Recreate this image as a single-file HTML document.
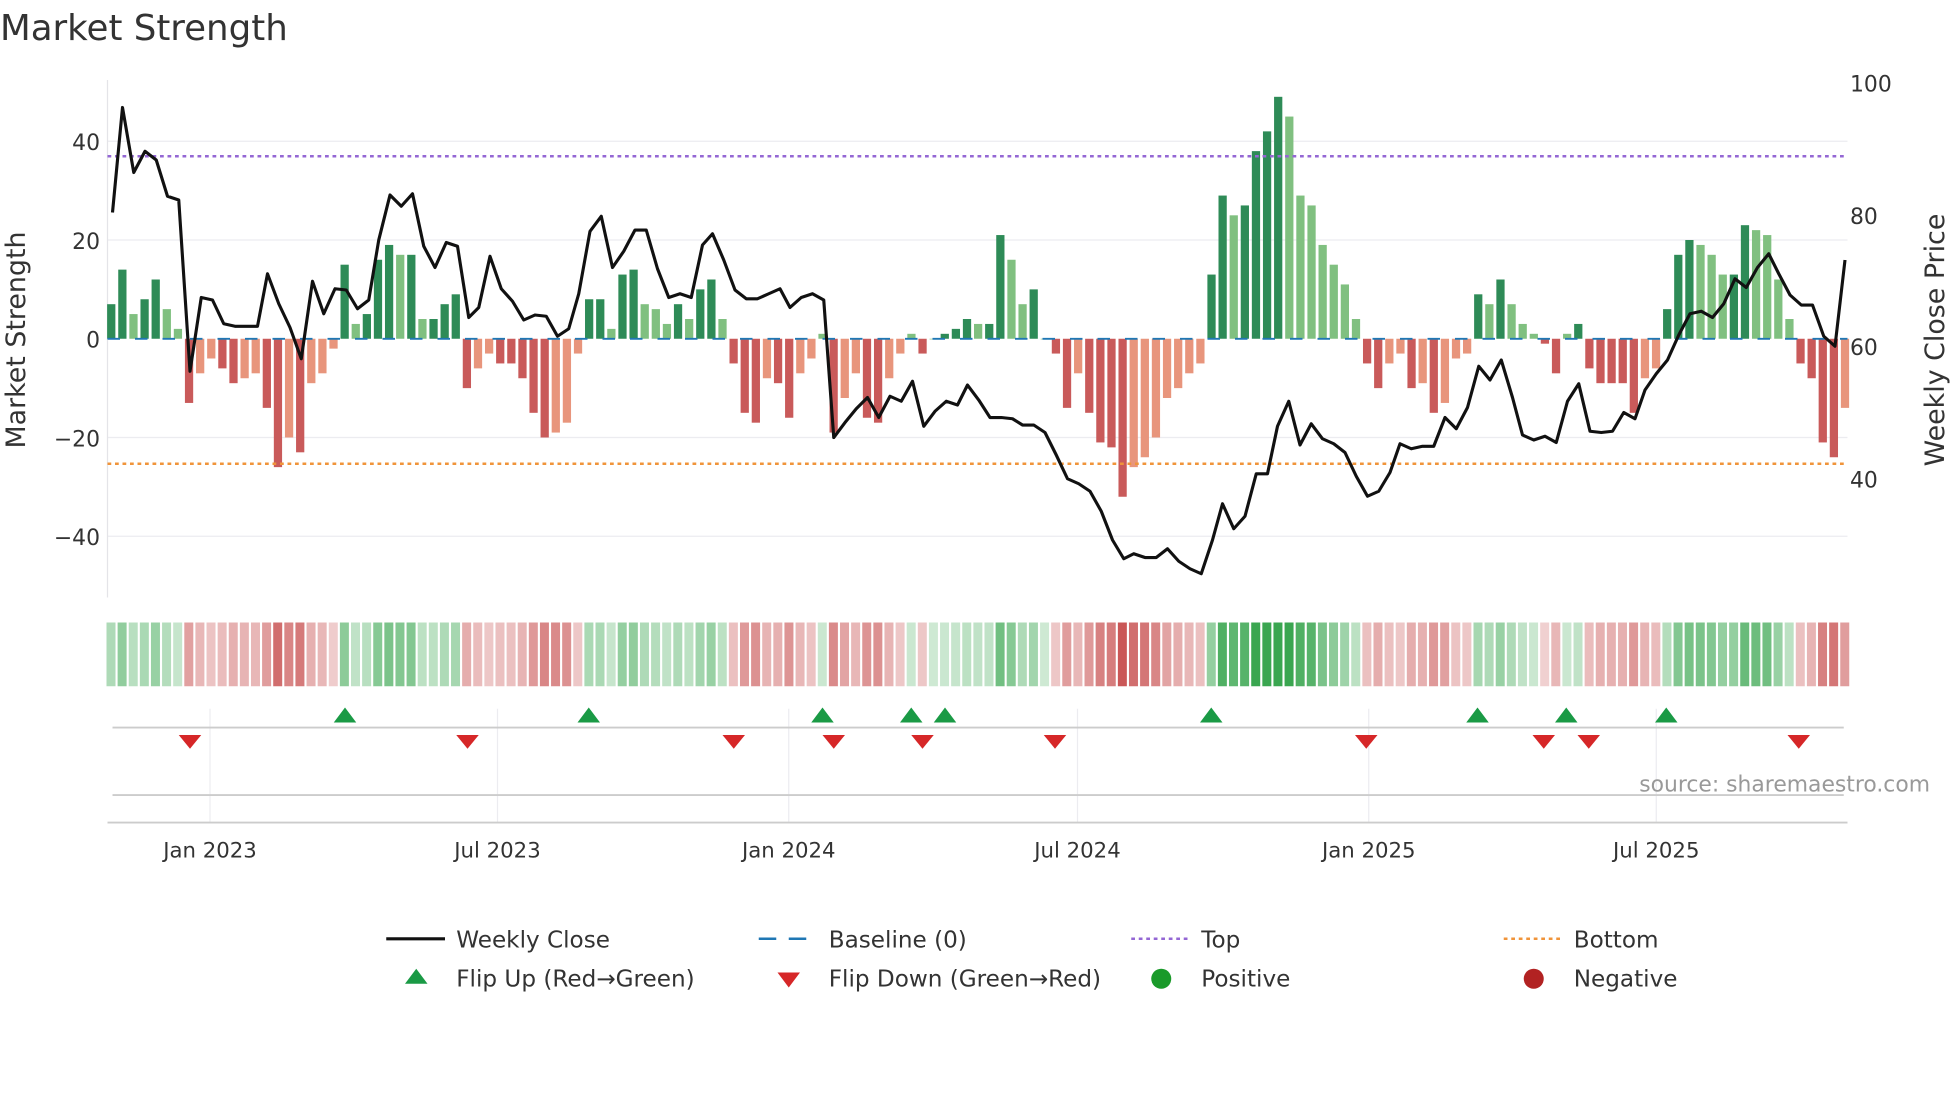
<!DOCTYPE html>
<html><head><meta charset="utf-8"><style>
html,body{margin:0;padding:0;background:#fff;}
svg{display:block;font-family:"DejaVu Sans","Liberation Sans",sans-serif;}
</style></head><body>
<svg id="s" width="1960" height="1102" viewBox="0 0 1568 881.6" preserveAspectRatio="none" xmlns="http://www.w3.org/2000/svg">
<rect width="1568" height="882" fill="#fff"/>
<text x="0" y="32" font-size="28.5" fill="#333">Market Strength</text>
<g stroke="#ececf0" stroke-width="1">
<line x1="86" y1="113" x2="1478" y2="113"/><line x1="86" y1="192" x2="1478" y2="192"/>
<line x1="86" y1="350" x2="1478" y2="350"/><line x1="86" y1="429" x2="1478" y2="429"/>
<line x1="168" y1="567" x2="168" y2="658"/><line x1="398" y1="567" x2="398" y2="658"/>
<line x1="631" y1="567" x2="631" y2="658"/><line x1="862" y1="567" x2="862" y2="658"/>
<line x1="1095" y1="567" x2="1095" y2="658"/><line x1="1325" y1="567" x2="1325" y2="658"/>
</g>
<line x1="86" y1="64" x2="86" y2="478" stroke="#e4e4e8"/>
<g font-size="17.5" fill="#333" text-anchor="end">
<text x="80" y="120">40</text><text x="80" y="199">20</text><text x="80" y="278">0</text>
<text x="80" y="357">−20</text><text x="80" y="436">−40</text>
</g>
<g font-size="17.5" fill="#333">
<text x="1480" y="73">100</text><text x="1480" y="179">80</text><text x="1480" y="284">60</text><text x="1480" y="390">40</text>
</g>
<text transform="translate(20,272) rotate(-90)" font-size="21.5" fill="#333" text-anchor="middle">Market Strength</text>
<text transform="translate(1555,272) rotate(-90)" font-size="21.5" fill="#333" text-anchor="middle">Weekly Close Price</text>
<g id="bars"></g>
<line x1="86" y1="271" x2="1478" y2="271" stroke="#1f77b4" stroke-width="1.5" stroke-dasharray="10,12"/>
<line x1="86" y1="125" x2="1478" y2="125" stroke="#9467d4" stroke-width="2" stroke-dasharray="3,3"/>
<line x1="86" y1="371" x2="1478" y2="371" stroke="#f0943a" stroke-width="2" stroke-dasharray="3,3"/>
<polyline id="pl" fill="none" stroke="#111" stroke-width="2.5" stroke-linejoin="round"/>
<g id="heat"></g>
<line x1="90" y1="582" x2="1475" y2="582" stroke="#ccc" stroke-width="1.5"/>
<line x1="90" y1="636" x2="1475" y2="636" stroke="#ccc" stroke-width="1.5"/>
<line x1="86" y1="658" x2="1478" y2="658" stroke="#ccc" stroke-width="1.5"/>
<g id="tri"></g>
<text x="1544" y="633" font-size="17.5" fill="#999" text-anchor="end">source: sharemaestro.com</text>
<g font-size="17" fill="#333" text-anchor="middle">
<text x="168" y="686">Jan 2023</text><text x="398" y="686">Jul 2023</text><text x="631" y="686">Jan 2024</text>
<text x="862" y="686">Jul 2024</text><text x="1095" y="686">Jan 2025</text><text x="1325" y="686">Jul 2025</text>
</g>
<g font-size="18.5" fill="#333">
<line x1="309" y1="751" x2="356" y2="751" stroke="#111" stroke-width="2.5"/><text x="365" y="758">Weekly Close</text>
<line x1="607" y1="751" x2="654" y2="751" stroke="#1f77b4" stroke-width="2" stroke-dasharray="14,10"/><text x="663" y="758">Baseline (0)</text>
<line x1="905" y1="751" x2="952" y2="751" stroke="#9467d4" stroke-width="2" stroke-dasharray="3,3"/><text x="961" y="758">Top</text>
<line x1="1203" y1="751" x2="1250" y2="751" stroke="#f0943a" stroke-width="2" stroke-dasharray="3,3"/><text x="1259" y="758">Bottom</text>
<polygon points="333,775 324,787 342,787" fill="#1a9a45"/><text x="365" y="789">Flip Up (Red→Green)</text>
<polygon points="622,778 640,778 631,790" fill="#d62728"/><text x="663" y="789">Flip Down (Green→Red)</text>
<circle cx="929" cy="783" r="8" fill="#1a9a2a"/><text x="961" y="789">Positive</text>
<circle cx="1227" cy="783" r="8" fill="#b22222"/><text x="1259" y="789">Negative</text>
</g>
</svg>
<script>
var v=[7,14,5,8,12,6,2,-13,-7,-4,-6,-9,-8,-7,-14,-26,-20,-23,-9,-7,-2,15,3,5,16,19,17,17,4,4,7,9,-10,-6,-3,-5,-5,-8,-15,-20,-19,-17,-3,8,8,2,13,14,7,6,3,7,4,10,12,4,-5,-15,-17,-8,-9,-16,-7,-4,1,-19,-12,-7,-16,-17,-8,-3,1,-3,0,1,2,4,3,3,21,16,7,10,0,-3,-14,-7,-15,-21,-22,-32,-26,-24,-20,-12,-10,-7,-5,13,29,25,27,38,42,49,45,29,27,19,15,11,4,-5,-10,-5,-3,-10,-9,-15,-13,-4,-3,9,7,12,7,3,1,-1,-7,1,3,-6,-9,-9,-9,-15,-8,-6,6,17,20,19,17,13,13,23,22,21,12,4,-5,-8,-21,-24,-14];
var NS="http://www.w3.org/2000/svg",n=v.length,x0=89,dx=(1476-89)/(n-1);
function el(p,t,a){var e=document.createElementNS(NS,t);for(var k in a)e.setAttribute(k,a[k]);document.getElementById(p).appendChild(e);}
for(var i=0;i<n;i++){var x=x0+i*dx,val=v[i],pv=i?v[i-1]:0,dark=Math.abs(val)>=Math.abs(pv);
var c=val>=0?(dark?"#2e8b57":"#80c080"):(dark?"#c95a5a":"#e8957c");
var h=Math.abs(val)*3.95,y=val>=0?271-h:271;
el("bars","rect",{x:x-3.3,y:y,width:6.6,height:Math.max(h,0.5),fill:c});
var a=Math.min(1,0.25+Math.abs(val)/45);
el("heat","rect",{x:x-3.8,y:498,width:7.2,height:51,fill:val>=0?"#3aa650":"#c85050","fill-opacity":a.toFixed(2)});}
var P=[90,170,98,86,107,138,116,121,125,128,134,157,143,160,152,297,161,238,170,240,179,259,188,261,197,261,206,261,214,219,223,243,232,262,241,287,250,225,259,251,268,231,277,232,286,247,295,240,303,192,312,156,321,165,330,155,339,197,348,214,357,194,366,197,375,254,383,246,392,205,401,231,410,241,419,256,428,252,437,253,446,269,455,263,463,235,472,185,481,173,490,214,499,201,508,184,517,184,526,215,535,238,544,235,553,238,562,196,570,187,579,208,588,232,597,239,606,239,615,235,624,231,632,246,641,238,650,235,659,240,667,350,676,338,685,327,694,318,703,334,712,317,721,321,730,305,739,341,748,329,757,321,766,324,774,308,783,320,792,334,801,334,810,335,818,340,827,340,836,346,845,364,854,383,863,387,872,393,881,409,890,432,899,447,907,443,916,446,925,446,934,439,943,449,952,455,961,459,970,432,978,403,987,423,996,413,1005,379,1014,379,1022,341,1031,321,1040,356,1049,339,1058,351,1067,355,1076,362,1085,381,1094,397,1103,393,1112,378,1120,355,1129,359,1138,357,1147,357,1156,334,1165,343,1174,326,1183,293,1192,304,1201,288,1210,318,1218,348,1227,352,1236,349,1245,354,1254,321,1263,307,1272,345,1281,346,1290,345,1299,330,1308,335,1316,312,1325,299,1334,288,1343,268,1352,251,1361,249,1370,254,1379,243,1388,223,1397,230,1406,214,1415,203,1423,219,1432,236,1441,244,1450,244,1459,269,1468,277,1476,208];
var s="";for(var j=0;j<P.length;j+=2)s+=P[j]+","+P[j+1]+" ";document.getElementById("pl").setAttribute("points",s);
[276,471,658,729,756,969,1182,1253,1333].forEach(function(x){el("tri","polygon",{points:(x)+",566 "+(x-9)+",578 "+(x+9)+",578",fill:"#1a9a45"});});
[152,374,587,667,738,844,1093,1235,1271,1439].forEach(function(x){el("tri","polygon",{points:(x-9)+",588 "+(x+9)+",588 "+x+",599",fill:"#d62728"});});
</script>
</body></html>
